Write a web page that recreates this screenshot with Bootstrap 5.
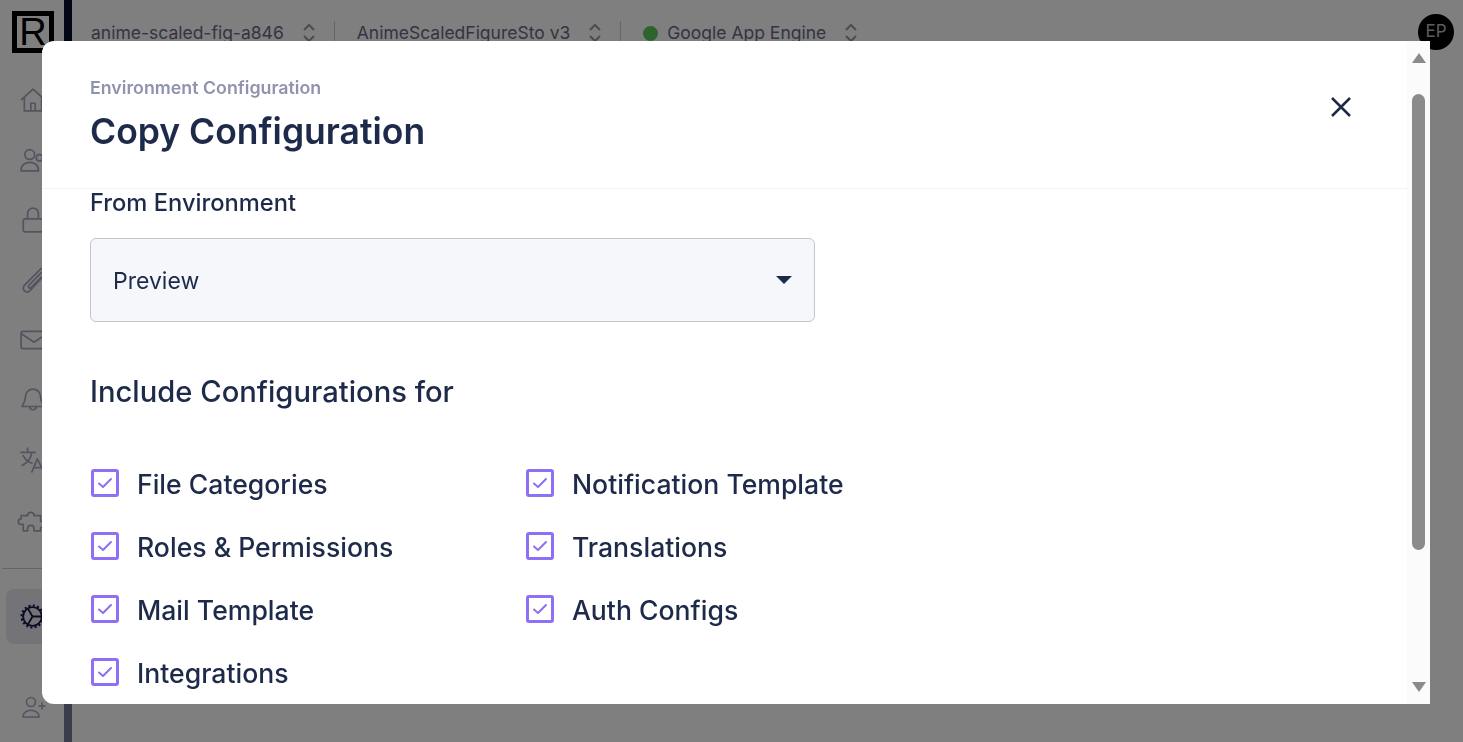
<!DOCTYPE html>
<html lang="en">
<head>
    <meta charset="UTF-8">
    <meta name="viewport" content="width=device-width, initial-scale=1.0">
    <title>Copy Configuration</title>
    <link href="https://cdn.jsdelivr.net/npm/bootstrap@5.3.0/dist/css/bootstrap.min.css" rel="stylesheet">
    <style>
        html, body { height: 100%; overflow: hidden; }
        body { font-family: "Inter", "Liberation Sans", sans-serif; color: #1e2a4a; background: #fff; }

        /* page behind the modal */
        .app-shell { height: 742px; }
        .side-rail { width: 64px; flex: none; }
        .rail-logo { width: 42px; height: 42px; margin: 11px 0 17px 12px; border: 5px solid #000; overflow: hidden; }
        .rail-logo span { font: 400 38px/32px "Liberation Sans", sans-serif; color: #000; display: block; text-align: center; }
        .rail-item { height: 60px; padding-left: 20px; color: #a8a8c0; }
        .rail-item svg { width: 26px; height: 26px; overflow: visible; }
        .rail-sep { height: 1px; background: #ccc; margin: 18px 0 20px 2px; }
        .rail-active { height: 55px; margin-left: 6px; padding-left: 14px; background: #e8e8f0; border-radius: 8px; color: #14144a; margin-bottom: 33px; }
        .rail-active svg { width: 25px; height: 25px; }
        .rail-bar { width: 8px; flex: none; background: linear-gradient(#040c28 50%, #767a96 50%); }
        .top-strip { height: 66px; padding-left: 19px; font-size: 17.5px; color: #686884; }
        .strip-arrows { width: 14px; height: 20px; flex: none; margin-left: 18px; color: #999; }
        .strip-sep { width: 1px; height: 24px; background: #ccc; margin: 0 22px 0 18px; }
        .strip-dot { width: 15px; height: 15px; border-radius: 50%; background: #5ac85a; margin-right: 9px; }
        .user-chip { width: 36px; height: 36px; border-radius: 50%; background: #000; color: #bbb; font-size: 17px; margin: 0 9px 2px auto; }

        /* modal */
        .cfg-dialog { max-width: none; width: 1388px; margin: 41px 0 0 42px; }
        .cfg-content { height: 663px; border: 0; border-radius: 12px 0 0 12px; overflow: hidden; flex-direction: row; }
        .cfg-main { flex: 1; min-width: 0; }
        .cfg-header { height: 148px; padding: 0 48px; border-bottom: 1px solid #f3f3f6; align-items: flex-start; }
        .cfg-eyebrow { font-size: 17.8px; font-weight: 600; color: #8f93ad; margin-top: 35px; line-height: 24px; }
        .cfg-title { font-size: 35.5px; font-weight: 600; line-height: 44px; margin: 10px 0 0; color: #1e2a4a; }
        .cfg-close { margin: 54px 6px 0 0; padding: 0; border: 0; background: none; color: #1e2a4a; line-height: 0; }
        .cfg-body { padding: 0 48px; overflow: hidden; }
        .cfg-label { font-size: 23.7px; line-height: 30px; margin: -1px 0 20px; display: block; font-weight: 500; }
        .cfg-select { width: 725px; height: 84px; padding: 7px 22px 5px; font-size: 23px; color: #1e2a4a; background-color: #f5f7fb; border-color: #c6c6ca; border-radius: 6px;
            background-size: 16px 8px; background-position: right 22px center;
            background-image: url("data:image/svg+xml,%3Csvg xmlns='http://www.w3.org/2000/svg' viewBox='0 0 16 8'%3E%3Cpath fill='%231e2a4a' d='M0 0h16L8 8z'/%3E%3C/svg%3E"); }
        .cfg-subhead { font-size: 29.2px; line-height: 38px; margin: 51px 0 55px; font-weight: 500; color: #1e2a4a; }
        .cfg-grid { width: 870px; row-gap: 29px; }
        .cfg-cell { width: 435px; padding: 0; height: 34px; margin: 0; }
        .cfg-cell .form-check-input { width: 28px; height: 28px; margin: 0 18px 0 1px; float: none; flex: none; border: 3px solid #8f6ff5; border-radius: 3px; background-color: #fff; background-size: 18px 18px;
            background-image: url("data:image/svg+xml,%3Csvg xmlns='http://www.w3.org/2000/svg' viewBox='0 0 18 18'%3E%3Cpath fill='none' stroke='%238f6ff5' stroke-width='2' stroke-linecap='round' stroke-linejoin='round' d='M3 9.5l4 3.500 8-8'/%3E%3C/svg%3E"); }
        .cfg-cell .form-check-label { font-size: 26.6px; line-height: 34px; padding-top: 1px; color: #1e2a4a; opacity: 1; font-weight: 500; }

        /* scrollbar drawn by hand, the real one does not show in the photo */
        .fake-scroll { width: 23px; flex: none; background: #fbfbfb; }
        .scroll-up { width: 0; height: 0; margin: 12px auto 0; border: 7px solid transparent; border-top: 0; border-bottom: 10px solid #8b8b8b; }
        .scroll-thumb { width: 13px; height: 456px; margin: 31px auto 0; background: #8b8b8b; border-radius: 7px; }
        .scroll-down { width: 0; height: 0; margin: 132px auto 0; border: 7px solid transparent; border-bottom: 0; border-top: 10px solid #8b8b8b; }
    </style>
</head>
<body>

    <div class="app-shell d-flex">
        <div class="side-rail">
            <div class="rail-logo"><span>R</span></div>
            <div class="rail-item d-flex align-items-center"><svg viewBox="0 0 24 24" fill="none" stroke="currentColor" stroke-width="1.6" stroke-linejoin="round"><path d="M1 12 12 2l11 10M4 10v12h16V10M10 22v-7h4v7"/></svg></div>
            <div class="rail-item d-flex align-items-center"><svg viewBox="0 0 24 24" fill="none" stroke="currentColor" stroke-width="1.6"><circle cx="9" cy="7" r="4.5"/><path d="M1 21c0-9 16-9 16 0v1H1z"/><circle cx="18" cy="10" r="3"/></svg></div>
            <div class="rail-item d-flex align-items-center"><svg viewBox="0 0 24 24" fill="none" stroke="currentColor" stroke-width="1.6" stroke-linejoin="round"><rect x="3" y="11" width="18" height="12" rx="2"/><path d="M7 11V6a5 5 0 0 1 10 0v5"/></svg></div>
            <div class="rail-item d-flex align-items-center"><svg viewBox="0 0 24 24" fill="none" stroke="currentColor" stroke-width="1.6" stroke-linecap="round"><path d="M24 6 9 22c-3 3-8-1-5-5L19 2c2-2 6 1 4 4L10 19c-1 1-3 0-2-2L20 5"/></svg></div>
            <div class="rail-item d-flex align-items-center"><svg viewBox="0 0 24 24" fill="none" stroke="currentColor" stroke-width="1.6" stroke-linejoin="round"><rect x="1" y="4" width="24" height="16" rx="2"/><path d="m1 6 12 8 12-8"/></svg></div>
            <div class="rail-item d-flex align-items-center"><svg viewBox="0 0 24 24" fill="none" stroke="currentColor" stroke-width="1.6" stroke-linejoin="round"><path d="M12 2a7 7 0 0 0-7 7c0 5-3 8-3 9h20c0-1-3-4-3-9a7 7 0 0 0-7-7zM9 18a3 3 0 0 0 6 0"/></svg></div>
            <div class="rail-item d-flex align-items-center"><svg viewBox="0 0 24 24" fill="none" stroke="currentColor" stroke-width="1.6" stroke-linecap="round" stroke-linejoin="round"><path d="M1 5h13M7 1v4M11 5c-1 6-5 10-9 12M3 8c2 4 5 6 8 7M11 23l5-12 6 12M13 19h7"/></svg></div>
            <div class="rail-item d-flex align-items-center"><svg viewBox="0 0 24 24" fill="none" stroke="currentColor" stroke-width="1.6" stroke-linejoin="round"><path d="M1 8h6a3 3 0 1 1 6 0h6v5a3 3 0 1 1 0 6v3h-6v-2a3 3 0 1 0-6 0v2H3v-6H1a2.500 2.500 0 0 1 0-5z"/></svg></div>
            <div class="rail-sep"></div>
            <div class="rail-active d-flex align-items-center"><svg viewBox="0 0 24 24" fill="none" stroke="currentColor" stroke-width="1.800"><circle cx="12" cy="12" r="9"/><circle cx="12" cy="12" r="10.500" stroke-width="2" stroke-dasharray="2 2.120"/><path d="M12 12 7.500 4.200M12 12h9M12 12l-4.500 7.800"/></svg></div>
            <div class="rail-item d-flex align-items-center"><svg viewBox="0 0 26 24" fill="none" stroke="currentColor" stroke-width="1.6" stroke-linecap="round"><circle cx="11" cy="7" r="4.5"/><path d="M3 22c0-9 16-9 16 0zM19 11h6M22 8v6"/></svg></div>
        </div>
        <div class="rail-bar"></div>
        <div class="flex-grow-1">
            <div class="top-strip d-flex align-items-center">
                <span>anime-scaled-fig-a846</span>
                <svg class="strip-arrows" viewBox="0 0 14 20" fill="none" stroke="currentColor" stroke-width="2"><path d="m2 7 5-5 5 5M2 13l5 5 5-5"/></svg>
                <div class="strip-sep"></div>
                <span>AnimeScaledFigureSto v3</span>
                <svg class="strip-arrows" viewBox="0 0 14 20" fill="none" stroke="currentColor" stroke-width="2"><path d="m2 7 5-5 5 5M2 13l5 5 5-5"/></svg>
                <div class="strip-sep"></div>
                <div class="strip-dot"></div>
                <span>Google App Engine</span>
                <svg class="strip-arrows" viewBox="0 0 14 20" fill="none" stroke="currentColor" stroke-width="2"><path d="m2 7 5-5 5 5M2 13l5 5 5-5"/></svg>
                <div class="user-chip d-flex align-items-center justify-content-center">EP</div>
            </div>
        </div>
    </div>

    <div class="modal-backdrop show"></div>

    <div class="modal d-block">
        <div class="modal-dialog cfg-dialog">
            <div class="modal-content cfg-content">
                <div class="cfg-main d-flex flex-column">
                    <div class="modal-header cfg-header">
                        <div>
                            <div class="cfg-eyebrow">Environment Configuration</div>
                            <h5 class="modal-title cfg-title">Copy Configuration</h5>
                        </div>
                        <button type="button" class="cfg-close ms-auto" aria-label="Close">
                            <svg width="24" height="24" viewBox="0 0 24 24" fill="none" stroke="currentColor" stroke-width="2.500"><path d="m3 3 18 18M21 3 3 21"/></svg>
                        </button>
                    </div>
                    <div class="modal-body cfg-body">
                        <label for="fromEnv" class="cfg-label">From Environment</label>
                        <select id="fromEnv" class="form-select cfg-select">
                            <option>Preview</option>
                        </select>
                        <div class="cfg-subhead">Include Configurations for</div>
                        <div class="cfg-grid d-flex flex-wrap">
                            <div class="form-check cfg-cell d-flex align-items-center"><input class="form-check-input" type="checkbox" id="c1" checked><label class="form-check-label" for="c1">File Categories</label></div>
                            <div class="form-check cfg-cell d-flex align-items-center"><input class="form-check-input" type="checkbox" id="c2" checked><label class="form-check-label" for="c2">Notification Template</label></div>
                            <div class="form-check cfg-cell d-flex align-items-center"><input class="form-check-input" type="checkbox" id="c3" checked><label class="form-check-label" for="c3">Roles &amp; Permissions</label></div>
                            <div class="form-check cfg-cell d-flex align-items-center"><input class="form-check-input" type="checkbox" id="c4" checked><label class="form-check-label" for="c4">Translations</label></div>
                            <div class="form-check cfg-cell d-flex align-items-center"><input class="form-check-input" type="checkbox" id="c5" checked><label class="form-check-label" for="c5">Mail Template</label></div>
                            <div class="form-check cfg-cell d-flex align-items-center"><input class="form-check-input" type="checkbox" id="c6" checked><label class="form-check-label" for="c6">Auth Configs</label></div>
                            <div class="form-check cfg-cell d-flex align-items-center"><input class="form-check-input" type="checkbox" id="c7" checked><label class="form-check-label" for="c7">Integrations</label></div>
                        </div>
                    </div>
                </div>
                <div class="fake-scroll">
                    <div class="scroll-up"></div>
                    <div class="scroll-thumb"></div>
                    <div class="scroll-down"></div>
                </div>
            </div>
        </div>
    </div>

    <script src="https://cdn.jsdelivr.net/npm/bootstrap@5.3.0/dist/js/bootstrap.bundle.min.js"></script>
</body>
</html>
